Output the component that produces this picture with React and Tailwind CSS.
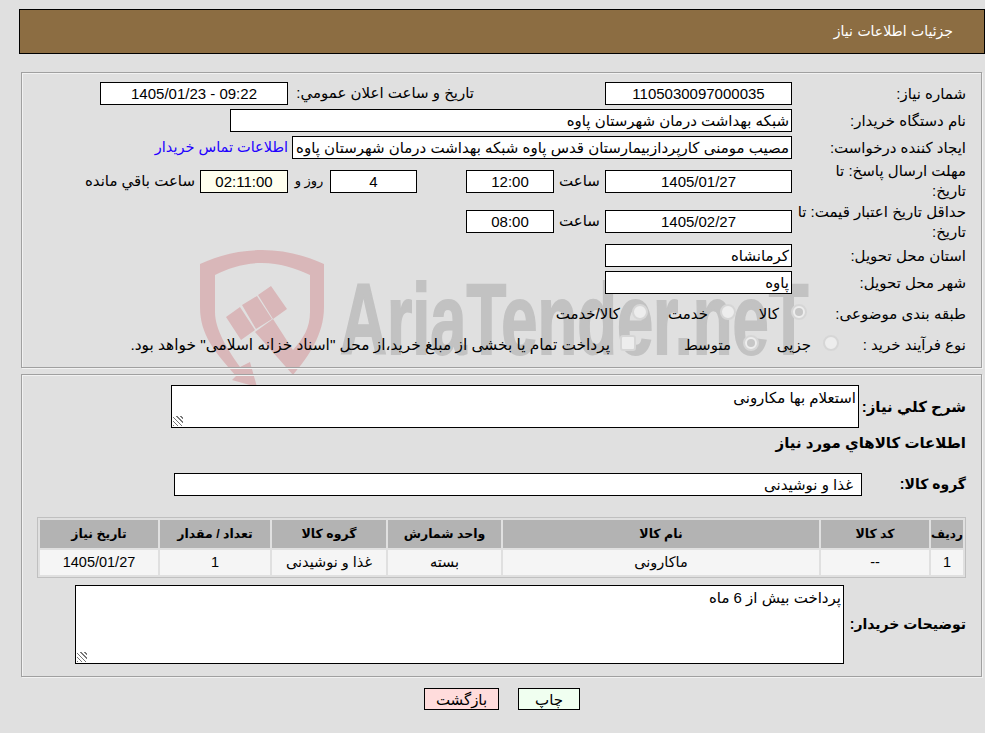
const font = "font-['Liberation_Sans','DejaVu_Sans',sans-serif]";

const Box = ({ className = 'bg-white', children, center }) => (
  <div className={`h-[23px] shrink-0 border border-black text-[15px] leading-[21px] whitespace-nowrap overflow-hidden ${center ? 'text-center' : 'px-[2px]'} ${className}`}>
    {children}
  </div>
);

const Label = ({ children, className = 'w-[174px]' }) => (
  <div className={`shrink-0 text-[15px] leading-[20px] ${className}`}>{children}</div>
);

const Radio = ({ label, checked, className = '' }) => (
  <div className={`flex shrink-0 items-center gap-[12px] ${className}`}>
    <span className="-mt-[4px] flex size-[16px] shrink-0 items-center justify-center rounded-full border-2 border-[#d6d6d6] bg-[#ededed]">
      {checked && <span className="size-[8px] rounded-full bg-[#c6c6c6]"></span>}
    </span>
    <span className="text-[15px] leading-[20px] whitespace-nowrap">{label}</span>
  </div>
);

const Grip = () => (
  <span className="absolute bottom-[1px] left-[1px] h-[10px] w-[10px] bg-[repeating-linear-gradient(45deg,#777_0_1px,transparent_1px_3px)]"></span>
);

const Watermark = () => (
  <div dir="ltr" className="absolute left-[198px] top-[248px] h-[140px] w-[640px] pointer-events-none">
    <svg className="absolute left-0 top-0" width="130" height="140" viewBox="198 248 130 140">
      <path
        fill="#d9b7b9"
        d="M200 264 C220 255 240 250 262 250 C284 250 304 255 324 264 V307 C324 335 308 357 293 375 L255 332 L273 319 L293 350 C303 339 310 328 310 312 V275 C295 268 280 263 262 263 C244 263 229 268 215 275 V312 C215 330 228 350 240 367 L250 362 L257 387 L232 380 L236 376 C215 352 200 335 200 307 Z"
      />
      <path fill="#d9b7b9" d="M226 317 L240 307 L255 330 L241 340 Z M242 305 L257 296 L272 319 L256 329 Z M258 295 L271 286 L287 309 L273 319 Z" />
    </svg>
    <div className="absolute left-[142px] top-[21px] origin-left scale-x-[0.65] whitespace-nowrap font-['Liberation_Sans',sans-serif] text-[100px] font-bold leading-[100px] text-[#c2c2c2] [-webkit-text-stroke:2px_#c2c2c2]">
      AriaTender.neT
    </div>
  </div>
);

const App = () => {
  return (
    <div dir="rtl" className={`relative min-h-[733px] w-full overflow-hidden bg-[#e0e0e0] pt-[9px] text-black ${font}`}>
      <Watermark />

      <div className="relative ml-[19px] flex h-[45px] items-center border border-black bg-[#8c6d42] pr-[31px] font-['DejaVu_Sans',sans-serif] text-[14px] text-white">
        جزئیات اطلاعات نیاز
      </div>

      <div className="relative ml-[21px] mr-[3px] mt-[18px] h-[296px] border border-[#a0a0a0] pr-[15px] pt-[7px] shadow-[1px_1px_0_#f2f2f2,inset_1px_1px_0_#f2f2f2]">
        <div className="flex h-[27px] items-center">
          <Label>شماره نیاز:</Label>
          <Box center className="w-[187px] bg-white">1105030097000035</Box>
          <div className="mr-[131px] w-[186px] shrink-0 whitespace-nowrap text-[15px]">تاریخ و ساعت اعلان عمومي:</div>
          <Box center className="w-[188px] bg-white">09:22 - 1405/01/23</Box>
        </div>
        <div className="flex h-[27px] items-center">
          <Label>نام دستگاه خریدار:</Label>
          <Box className="w-[562px] bg-white">شبکه بهداشت درمان شهرستان پاوه</Box>
        </div>
        <div className="flex h-[27px] items-center">
          <Label>ایجاد کننده درخواست:</Label>
          <Box className="w-[500px] bg-white">مصیب مومنی کارپردازبیمارستان قدس پاوه شبکه بهداشت درمان شهرستان پاوه</Box>
          <span className="mr-[4px] whitespace-nowrap text-[14.5px] text-[#2200ff]">اطلاعات تماس خریدار</span>
        </div>
        <div className="flex h-[40px] items-center">
          <Label className="w-[174px] pl-[20px]">مهلت ارسال پاسخ: تا تاریخ:</Label>
          <Box center className="w-[187px] bg-white">1405/01/27</Box>
          <span className="w-[51px] shrink-0 text-center text-[15px]">ساعت</span>
          <Box center className="w-[88px] bg-white">12:00</Box>
          <Box center className="mr-[49px] w-[87px] bg-white">4</Box>
          <span className="w-[42px] shrink-0 text-center text-[13px] whitespace-nowrap">روز و</span>
          <Box center className="w-[88px] bg-[#ffffee]">02:11:00</Box>
          <span className="mr-[5px] whitespace-nowrap text-[15px]">ساعت باقي مانده</span>
        </div>
        <div className="flex h-[41px] items-center">
          <Label>حداقل تاریخ اعتبار قیمت: تا تاریخ:</Label>
          <Box center className="w-[187px] bg-white">1405/02/27</Box>
          <span className="w-[51px] shrink-0 text-center text-[15px]">ساعت</span>
          <Box center className="w-[88px] bg-white">08:00</Box>
        </div>
        <div className="flex h-[27px] items-center">
          <Label>استان محل تحویل:</Label>
          <Box className="w-[187px] bg-white">کرمانشاه</Box>
        </div>
        <div className="flex h-[27px] items-center">
          <Label>شهر محل تحویل:</Label>
          <Box className="w-[187px] bg-white">پاوه</Box>
        </div>
        <div className="mt-[2px] flex h-[31px] items-center">
          <Label className="w-[159px] whitespace-nowrap">طبقه بندی موضوعی:</Label>
          <Radio checked label="کالا" className="w-[71px]" />
          <Radio label="خدمت" className="w-[88px]" />
          <Radio label="کالا/خدمت" />
        </div>
        <div className="mt-[1px] flex h-[29px] items-center">
          <Label className="w-[127px] whitespace-nowrap">نوع فرآیند خرید :</Label>
          <Radio label="جزیی" className="w-[80px]" />
          <Radio checked label="متوسط" className="w-[123px]" />
          <span className="-mt-[4px] size-[16px] shrink-0 rounded-[3px] border-2 border-[#d6d6d6] bg-[#ededed]"></span>
          <span className="mr-[10px] whitespace-nowrap text-[15.4px]">پرداخت تمام یا بخشی از مبلغ خرید،از محل "اسناد خزانه اسلامی" خواهد بود.</span>
        </div>
      </div>

      <div className="relative ml-[21px] mr-[3px] mt-[6px] h-[303px] border border-[#a0a0a0] pr-[15px] pt-[10px] shadow-[1px_1px_0_#f2f2f2,inset_1px_1px_0_#f2f2f2]">
        <div className="flex items-center">
          <div className="w-[107px] shrink-0 whitespace-nowrap text-[15px] font-bold leading-[20px]">شرح کلي نیاز:</div>
          <div className="relative h-[43px] w-[688px] border border-black bg-white px-[2px] text-[15px] leading-[24px]">
            استعلام بها مکارونی
            <Grip />
          </div>
        </div>
        <div className="mt-[5px] text-[15px] font-bold leading-[20px]">اطلاعات کالاهاي مورد نیاز</div>
        <div className="mt-[20px] flex items-center">
          <div className="w-[104px] shrink-0 whitespace-nowrap text-[14px] font-bold">گروه کالا:</div>
          <Box className="w-[688px] bg-white pr-[8px]">غذا و نوشیدنی</Box>
        </div>
        <div className="ml-[15px] mt-[21px] border border-[#c0c0c0]">
          <table className="w-full table-fixed border-separate border-spacing-[2px] text-center text-[12.5px]">
            <thead>
              <tr className="bg-[#b3b3b3] font-bold">
                <th className="h-[28px] w-[32px] p-0 text-[12px]">ردیف</th>
                <th className="w-[108px] p-0">کد کالا</th>
                <th className="w-[316px] p-0">نام کالا</th>
                <th className="w-[113px] p-0">واحد شمارش</th>
                <th className="w-[114px] p-0">گروه کالا</th>
                <th className="w-[110px] p-0">تعداد / مقدار</th>
                <th className="p-0">تاریخ نیاز</th>
              </tr>
            </thead>
            <tbody>
              <tr className="bg-[#f5f5f5] text-[14.5px]">
                <td className="h-[25px] p-0 pt-[1px]">1</td>
                <td className="p-0 pt-[1px]">--</td>
                <td className="p-0 pt-[1px]">ماکارونی</td>
                <td className="p-0 pt-[1px]">بسته</td>
                <td className="p-0 pt-[1px]">غذا و نوشیدنی</td>
                <td className="p-0 pt-[1px]">1</td>
                <td className="p-0 pt-[1px]">1405/01/27</td>
              </tr>
            </tbody>
          </table>
        </div>
        <div className="mt-[7px] flex items-center">
          <div className="w-[122px] shrink-0 whitespace-nowrap text-[14px] font-bold">توضیحات خریدار:</div>
          <div className="relative h-[79px] w-[769px] border border-black bg-white px-[2px] text-[15px] leading-[24px]">
            پرداخت بیش از 6 ماه
            <Grip />
          </div>
        </div>
      </div>

      <div className="relative mt-[11px] flex justify-center gap-[19px] pl-[19px]">
        <button className="h-[22px] w-[62px] border border-black bg-[#f0fff0] text-[15px]">چاپ</button>
        <button className="h-[22px] w-[75px] border border-black bg-[#ffdcdc] text-[15px]">بازگشت</button>
      </div>
    </div>
  );
};

export default App;
